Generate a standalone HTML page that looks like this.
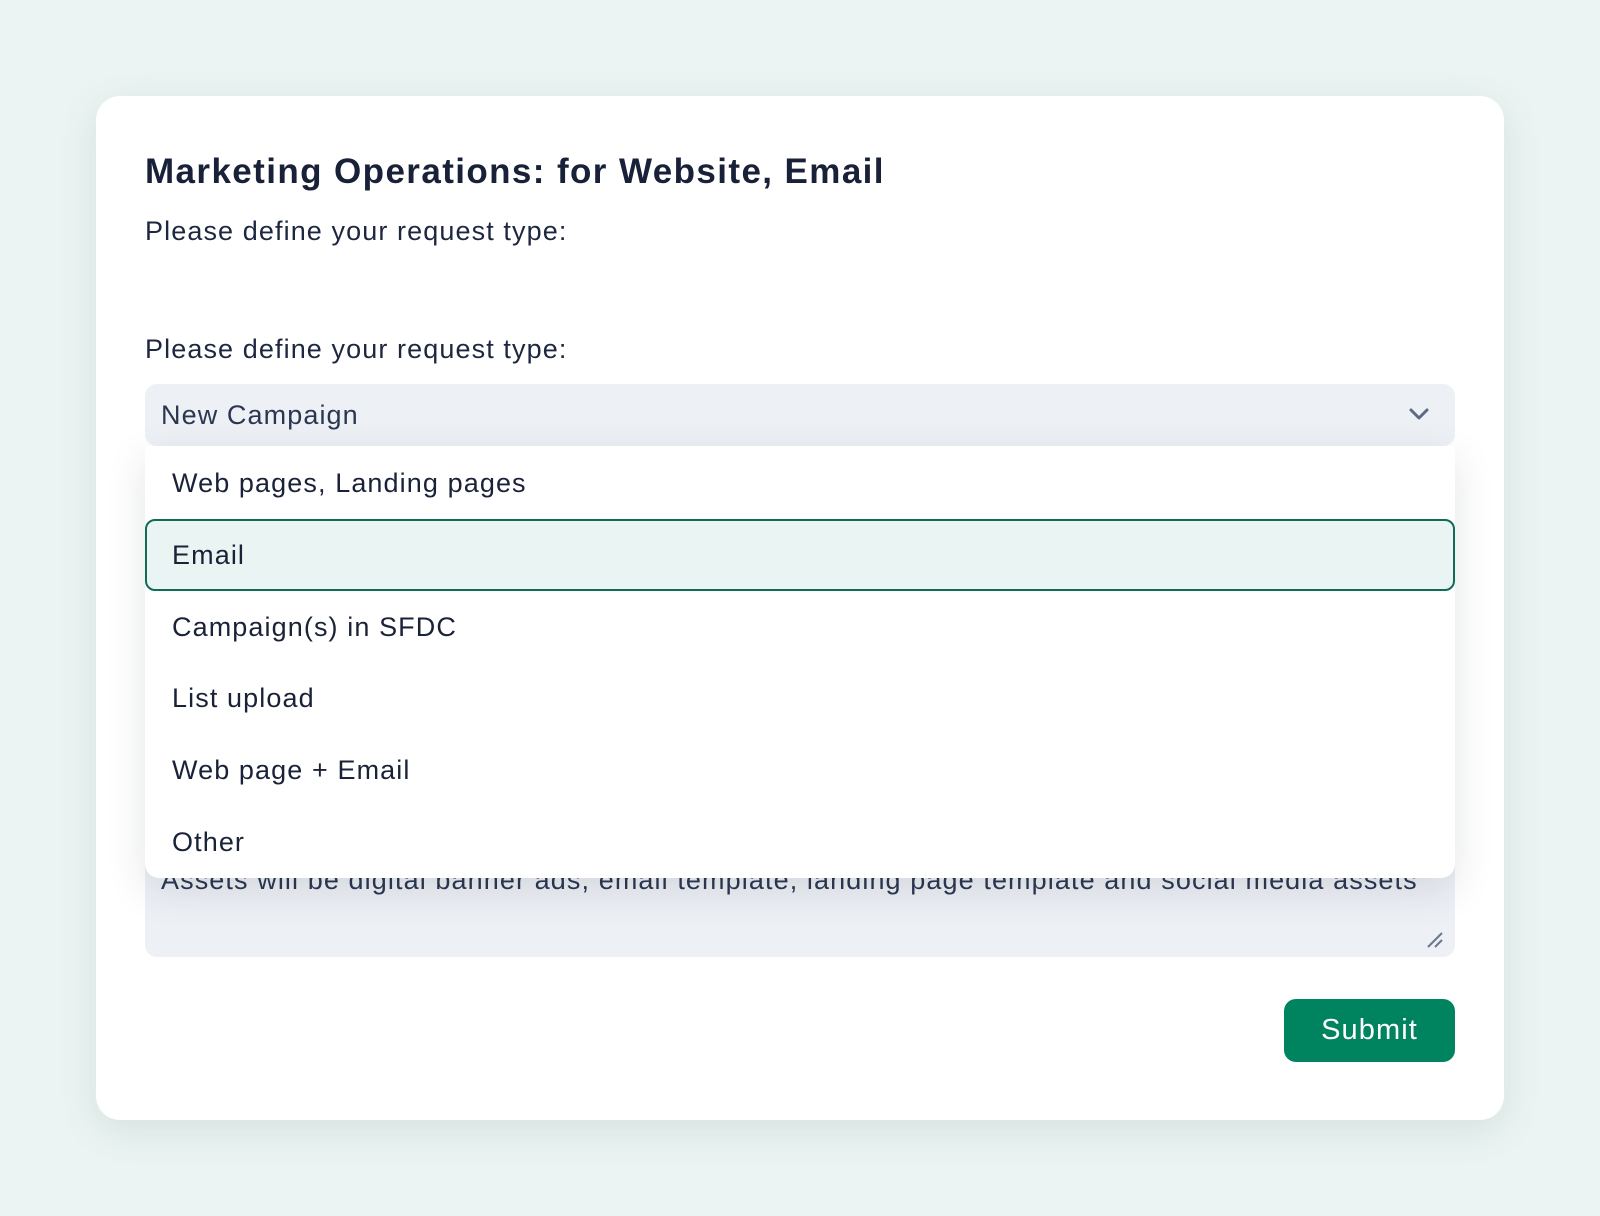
<!DOCTYPE html>
<html><head><meta charset="utf-8"><style>
html,body{margin:0;padding:0;}
body{width:1600px;height:1216px;background:#ebf4f2;font-family:"Liberation Sans",sans-serif;color:#1a2238;position:relative;overflow:hidden;letter-spacing:1.1px;}
.card{position:absolute;left:96px;top:96px;width:1408px;height:1024px;background:#fff;border-radius:24px;box-shadow:0 10px 40px rgba(60,100,90,0.12);}
.abs{position:absolute;white-space:nowrap;}
.title{left:49px;top:56px;font-size:35px;font-weight:bold;color:#182138;letter-spacing:1.4px;}
.lbl{left:49px;font-size:27px;color:#1e2740;}
.select{left:49px;top:288px;width:1310px;height:62px;background:#edf0f5;border-radius:12px;}
.select span{position:absolute;left:16px;top:16px;font-size:27px;color:#2b3650;}
.ta{left:49px;top:700px;width:1310px;height:161px;background:#edf0f5;border-radius:12px;overflow:hidden;}
.ta span{position:absolute;left:16px;top:69px;font-size:27px;color:#2b3650;}
.dd{left:49px;top:350px;width:1310px;height:432px;background:#fff;border-radius:0 0 14px 14px;box-shadow:0 12px 40px rgba(30,40,60,0.12);}
.it{position:absolute;left:27px;font-size:27px;color:#1a2238;}
.hl{position:absolute;left:0;top:73px;width:1306px;height:68px;border:2px solid #0d6e55;border-radius:10px;background:#eaf4f2;}
.btn{left:1188px;top:903px;width:171px;height:63px;background:#00845f;border-radius:12px;color:#fff;font-size:29px;text-align:center;line-height:63px;}
</style></head><body>
<div class="card">
<div class="abs title">Marketing Operations: for Website, Email</div>
<div class="abs lbl" style="top:120px">Please define your request type:</div>
<div class="abs lbl" style="top:238px">Please define your request type:</div>
<div class="abs ta"><span>Assets will be digital banner ads, email template, landing page template and social media assets</span>
<svg style="position:absolute;left:1280px;top:134px" width="20" height="20" viewBox="0 0 20 20"><path d="M3 17L17 3M10 17L17 10" stroke="#6b7690" stroke-width="2"/></svg></div>
<div class="abs select"><span>New Campaign</span>
<svg style="position:absolute;left:1263px;top:22px" width="22" height="16" viewBox="0 0 22 16"><path d="M3 4l8 8 8-8" fill="none" stroke="#5d6a85" stroke-width="3" stroke-linecap="round" stroke-linejoin="round"/></svg></div>
<div class="abs dd">
<div class="hl"></div>
<div class="it" style="top:22px">Web pages, Landing pages</div>
<div class="it" style="top:94px">Email</div>
<div class="it" style="top:166px">Campaign(s) in SFDC</div>
<div class="it" style="top:237px">List upload</div>
<div class="it" style="top:309px">Web page + Email</div>
<div class="it" style="top:381px">Other</div>
</div>
<div class="abs btn">Submit</div>
</div>
</body></html>
